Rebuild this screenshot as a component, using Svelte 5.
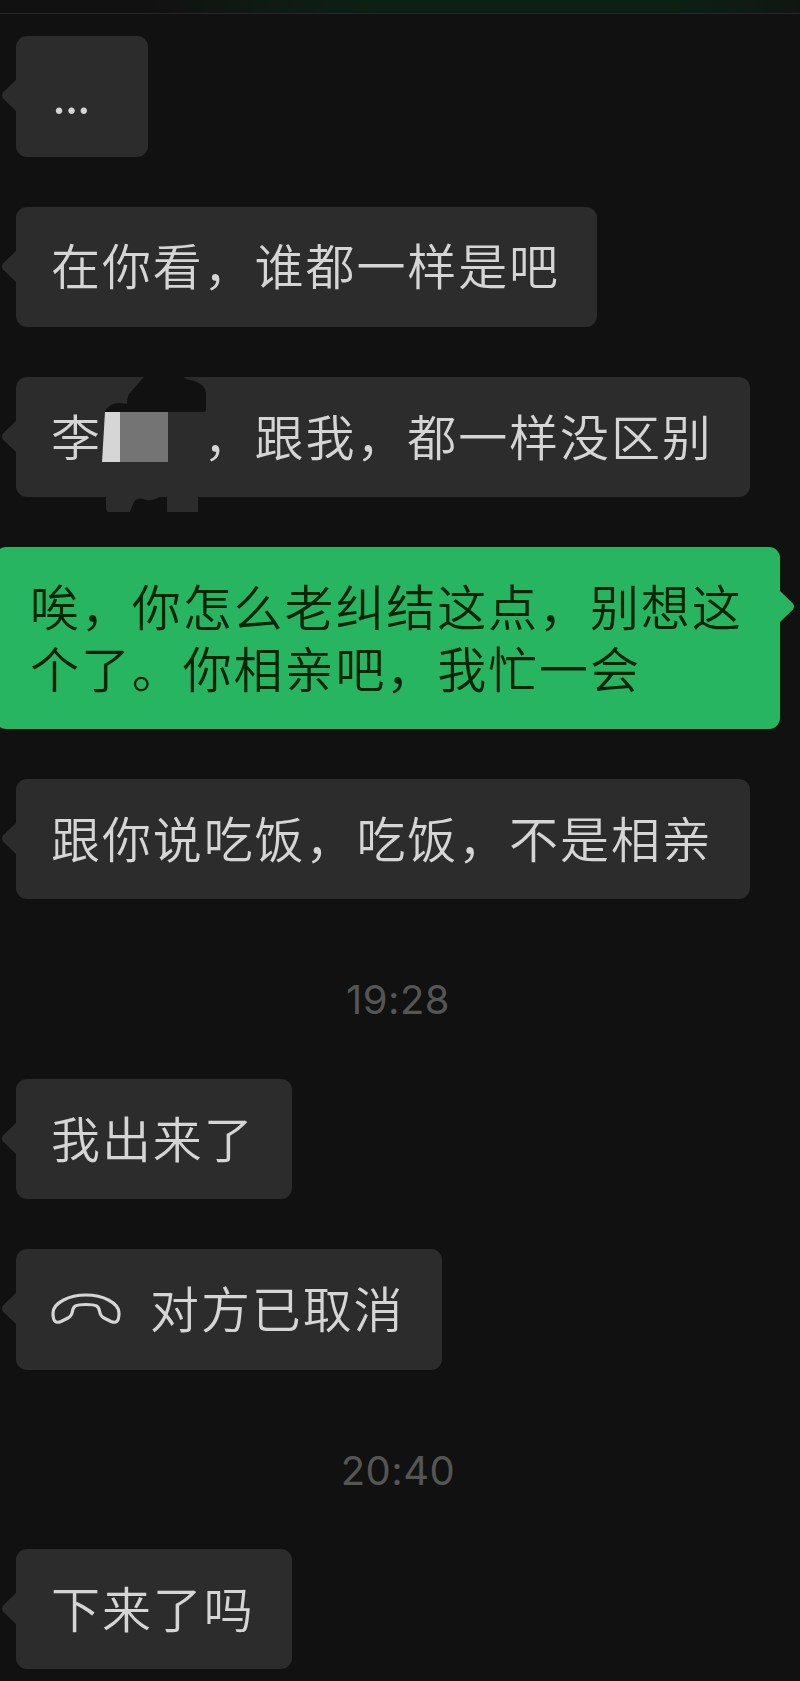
<script>
  const items = [
    { kind: 'dots', text: '...' },
    { kind: 'in', text: '在你看，谁都一样是吧' },
    { kind: 'masked', before: '李', after: '，跟我，都一样没区别' },
    { kind: 'out', lines: ['唉，你怎么老纠结这点，别想这', '个了。你相亲吧，我忙一会'] },
    { kind: 'in', text: '跟你说吃饭，吃饭，不是相亲' },
    { kind: 'time', text: '19:28' },
    { kind: 'in', text: '我出来了' },
    { kind: 'call', text: '对方已取消' },
    { kind: 'time', text: '20:40' },
    { kind: 'in', text: '下来了吗' }
  ];
</script>

<div class="screen">
  <header></header>
  <main>
    {#each items as item}
      {#if item.kind === 'time'}
        <time>{item.text}</time>
      {:else}
        <div class="bubble {item.kind}">
          <svg class="tail" viewBox="0 0 15 32"><path d="M15 0 L2 12.5 Q0 15.5 2 18.500 L15 31 Z" /></svg>
          {#if item.kind === 'masked'}
            <span>{item.before}</span><span class="gap"></span><span>{item.after}</span>
            <svg class="mask" viewBox="0 0 110 140">
              <path class="ink" d="M9 37 Q14 29 24 29 L31 30 Q31 24 33 20 L48 3 Q50 0 56 0 L84 0 Q88 5 94 6 Q109 9 110 19 V35 Q110 38 108 38 H9 Z" />
              <path class="pale" d="M9 38 H24 V88 H6 Z" />
              <path class="mid" d="M24 38 H72 V88 H24 Z" />
              <path class="card" d="M10 121 H66 Q60 127 50 126 Q42 122 38 128 L34 138 H12 Q10 137 10 133 Z M71 121 H102 V138 H71 Z" />
            </svg>
          {:else if item.kind === 'out'}
            <p>{#each item.lines as line}<span class="line">{line}</span>{/each}</p>
          {:else}
            {#if item.kind === 'call'}
              <svg class="phone" viewBox="0 0 70 32"><path d="M2 20 C2 10 18 2 35 2 C52 2 68 10 68 20 C68 29 65 30.500 60 28.500 L53 25 C50 23.500 49 21 48.500 18 C47.500 13 46 11.500 35 11.500 C24 11.500 22.500 13 21.500 18 C21 21 20 23.500 17 25 L10 28.500 C5 30.500 2 29 2 20 Z" /></svg>
            {/if}
            <span>{item.text}</span>
          {/if}
        </div>
      {/if}
    {/each}
  </main>
</div>

<style>
  :global(body) { background: #111; }
  .screen {
    box-sizing: border-box;
    height: 1681px;
    overflow: hidden;
    background: #111;
    color: #d5d5d5;
    font: 350 49px/61.5px "Noto Sans CJK SC", sans-serif;
    letter-spacing: 1.9px;
  }
  header {
    box-sizing: border-box;
    height: 14px;
    border-bottom: 1px solid #272727;
    background: linear-gradient(90deg, #111 150px, #0f1a13 260px, #0c2014 370px, #0c2014 670px, #0f1a13 760px, #101511 800px);
  }
  main {
    display: flex;
    flex-direction: column;
    align-items: flex-start;
    gap: 50px;
    padding: 22.300px 0 0 16px;
  }
  .bubble {
    position: relative;
    box-sizing: border-box;
    display: flex;
    align-items: center;
    height: 120.300px;
    padding: 0 37px 5px 35px;
    border-radius: 11px;
    background: #2c2c2c;
    white-space: nowrap;
  }
  .tail {
    position: absolute;
    left: -15px;
    top: 44px;
    width: 15px;
    height: 32px;
    fill: #2c2c2c;
  }
  .dots {
    width: 132px;
    padding: 0 36px;
    font-family: Inter, sans-serif;
    font-weight: 400;
    letter-spacing: -1.7px;
  }
  .gap { width: 101.800px; }
  .mask {
    position: absolute;
    left: 80px;
    top: -2.500px;
    width: 110px;
    height: 140px;
  }
  .ink { fill: #111; }
  .pale { fill: #d6d6d6; }
  .mid { fill: #747474; }
  .card { fill: #2c2c2c; }
  .out {
    height: 182px;
    width: 784.500px;
    margin-left: -21px;
    background: #28b561;
    color: #052306;
  }
  .out .tail {
    left: auto;
    right: -15px;
    transform: scaleX(-1);
    fill: #28b561;
  }
  p { margin: 0; }
  .line { display: block; }
  .phone {
    width: 70px;
    height: 32px;
    margin-right: 29px;
    margin-top: 4px;
    fill: none;
    stroke: #d5d5d5;
    stroke-width: 3.2;
    stroke-linejoin: round;
  }
  time {
    align-self: stretch;
    height: 79.500px;
    margin-right: 3px;
    text-align: center;
    font: 400 40px/101px Inter, sans-serif;
    letter-spacing: 0.5px;
    color: #555;
    transform: translateX(-8.500px);
  }
</style>
